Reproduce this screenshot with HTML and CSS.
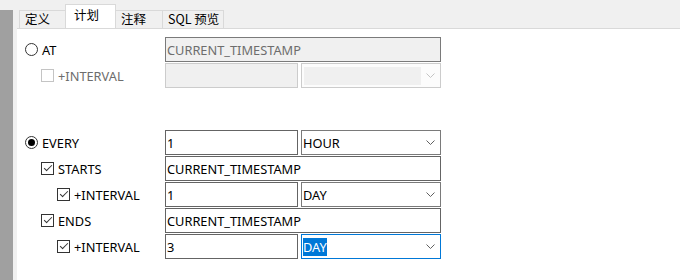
FILE: index.html
```html
<!DOCTYPE html>
<html lang="zh-CN">
<head>
    <meta charset="UTF-8">
    <title>事件 - 计划</title>
    <link rel="stylesheet" href="styles.css">
</head>
<body>
    <div class="frame">
        <div class="side"></div>
        <div class="main">
            <div class="tabs">
                <div class="tab">定义</div>
                <div class="tab active">计划</div>
                <div class="tab">注释</div>
                <div class="tab">SQL 预览</div>
            </div>

            <div class="panel">
                <!-- AT block (disabled) -->
                <div class="grid">
                    <label class="opt lvl0"><input type="radio" name="when"> AT</label>
                    <input class="field wide readonly" type="text" value="CURRENT_TIMESTAMP" disabled>

                    <label class="opt lvl1 off"><input type="checkbox" disabled> +INTERVAL</label>
                    <input class="field off" type="text" disabled>
                    <div class="combo off"><span class="combo-fill"></span><svg class="chev" width="9" height="5" viewBox="0 0 9 5"><path d="M0.5 0.5 L4.5 4.5 L8.5 0.5" fill="none" stroke="#c4c4c4"/></svg></div>
                </div>

                <!-- EVERY block -->
                <div class="grid every">
                    <label class="opt lvl0"><input type="radio" name="when" checked> EVERY</label>
                    <input class="field" type="text" value="1">
                    <div class="combo"><span>HOUR</span><svg class="chev" width="9" height="5" viewBox="0 0 9 5"><path d="M0.5 0.5 L4.5 4.5 L8.5 0.5" fill="none" stroke="#606060"/></svg></div>

                    <label class="opt lvl1"><input type="checkbox" checked> STARTS</label>
                    <input class="field wide" type="text" value="CURRENT_TIMESTAMP">

                    <label class="opt lvl2"><input type="checkbox" checked> +INTERVAL</label>
                    <input class="field" type="text" value="1">
                    <div class="combo"><span>DAY</span><svg class="chev" width="9" height="5" viewBox="0 0 9 5"><path d="M0.5 0.5 L4.5 4.5 L8.5 0.5" fill="none" stroke="#606060"/></svg></div>

                    <label class="opt lvl1"><input type="checkbox" checked> ENDS</label>
                    <input class="field wide" type="text" value="CURRENT_TIMESTAMP">

                    <label class="opt lvl2"><input type="checkbox" checked> +INTERVAL</label>
                    <input class="field" type="text" value="3">
                    <div class="combo focus"><span class="sel">DAY</span><svg class="chev" width="9" height="5" viewBox="0 0 9 5"><path d="M0.5 0.5 L4.5 4.5 L8.5 0.5" fill="none" stroke="#606060"/></svg></div>
                </div>
            </div>
        </div>
    </div>
</body>
</html>
```

FILE: styles.css
```css
* {
    box-sizing: border-box;
}

body {
    margin: 0;
    background: #f0f0f0;
    font-family: "Noto Sans", "Noto Sans CJK SC", sans-serif;
    font-size: 12.8px;
    color: #000;
}

.frame {
    display: flex;
    height: 280px;
    overflow: hidden;
}

/* grey strip on the far left */
.side {
    width: 13px;
    margin-top: 10px;
    margin-right: 4px;
    background: #a0a0a0;
}

.main {
    flex: 1;
    display: flex;
    flex-direction: column;
}

/* tab strip */
.tabs {
    height: 29px;
    display: flex;
    align-items: flex-end;
    padding-left: 2px;
    border-bottom: 1px solid #d9d9d9;
}

.tab {
    min-width: 46px;
    height: 19px;
    padding: 0 4px 0 5px;
    margin-bottom: -1px;
    border: 1px solid #d9d9d9;
    border-right: none;
    background: #f0f0f0;
    font-family: "Noto Sans CJK SC", sans-serif;
    font-size: 12.5px;
    line-height: 16px;
}

.tab:last-child {
    border-right: 1px solid #d9d9d9;
}

.tab.active {
    height: 25px;
    min-width: 51px;
    padding-left: 8px;
    background: #fff;
    border-right: 1px solid #d9d9d9;
    line-height: 20px;
}

.tab.active + .tab {
    border-left: none;
}

.panel {
    flex: 1;
    background: #fff;
    padding-top: 8px;
}

/* label column + two control columns */
.grid {
    display: grid;
    grid-template-columns: 145px 133px 140px;
    grid-auto-rows: 25px;
    column-gap: 3px;
    row-gap: 1px;
}

.every {
    margin-top: 42px;
}

.opt {
    grid-column: 1;
    display: flex;
    align-items: center;
    gap: 4px;
    white-space: nowrap;
}

.opt.off {
    color: #6d6d6d;
}

.lvl0 { padding-left: 8px; }
.lvl1 { padding-left: 24px; }
.lvl2 { padding-left: 40px; }

/* windows-ish radios and checkboxes */
input[type="radio"],
input[type="checkbox"] {
    -webkit-appearance: none;
    appearance: none;
    position: relative;
    width: 13px;
    height: 13px;
    margin: 0;
    border: 1px solid #333;
    background: #fff;
    flex: none;
}

input[type="radio"] {
    border-radius: 50%;
}

input[type="radio"]:checked::before {
    content: "";
    position: absolute;
    left: 2px;
    top: 2px;
    width: 7px;
    height: 7px;
    border-radius: 50%;
    background: #000;
}

input[type="checkbox"]:checked::before {
    content: "";
    position: absolute;
    left: 2px;
    top: 2px;
    width: 7px;
    height: 3px;
    border-left: 1px solid #333;
    border-bottom: 1px solid #333;
    transform: rotate(-45deg);
}

input[type="checkbox"]:disabled {
    border-color: #c4c4c4;
}

/* text boxes */
.field {
    grid-column: 2;
    height: 25px;
    margin: 0;
    padding: 0 1px;
    border: 1px solid #646464;
    background: #fff;
    font: inherit;
    color: #000;
    outline: none;
}

.field.wide {
    grid-column: 2 / 4;
}

.field.readonly {
    background: #f0f0f0;
    border-color: #7a7a7a;
    color: #6d6d6d;
}

.field.off {
    background: #f0f0f0;
    border-color: #cccccc;
}

/* combo boxes */
.combo {
    grid-column: 3;
    display: flex;
    align-items: center;
    justify-content: space-between;
    padding: 0 5px 0 1px;
    border: 1px solid #7a7a7a;
    background: #fff;
}

.combo.off {
    border-color: #cccccc;
    background: #fcfcfc;
    padding-left: 2px;
}

.combo-fill {
    width: 117px;
    height: 18px;
    background: #f0f0f0;
}

.combo.focus {
    border-color: #0078d7;
}

.combo .sel {
    background: #0078d7;
    color: #fff;
    line-height: 18px;
}

.chev {
    display: block;
}
```
